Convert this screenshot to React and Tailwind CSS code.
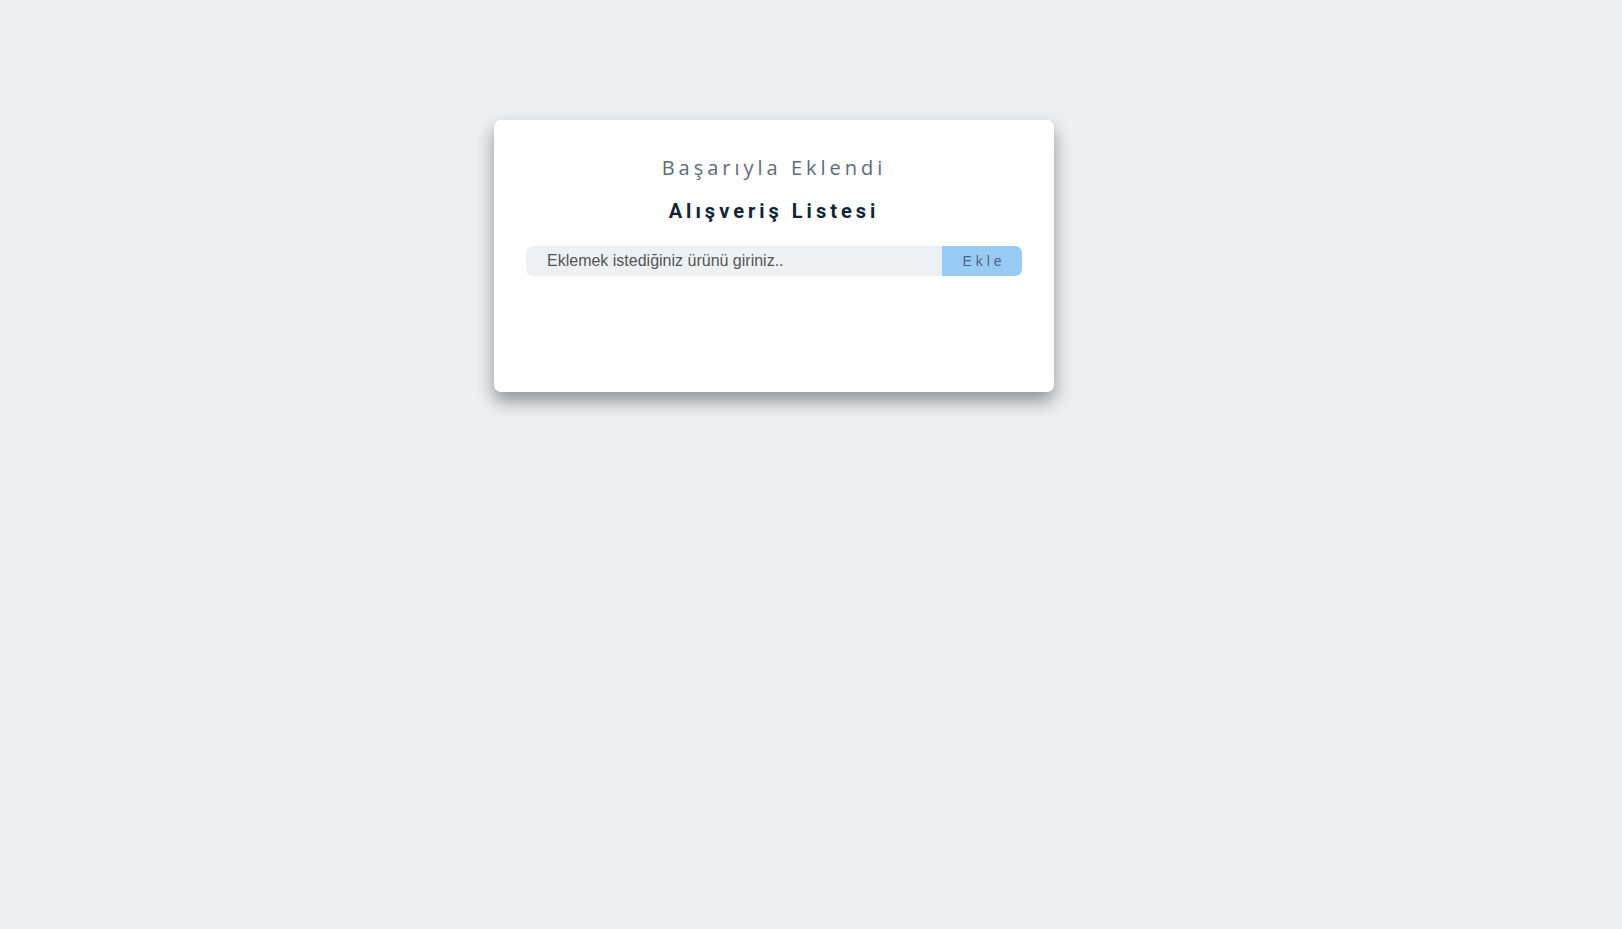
import React, { useState } from 'react';

export default function App() {
  const [item, setItem] = useState('');

  return (
    <div className="min-h-screen w-full bg-[#ecf0f3] pt-[120px]">
      <div className="ml-[494px] w-[560px] h-[272px] bg-white rounded-[7px] shadow-[0_9px_18px_rgba(0,0,0,0.4)] px-8 pt-[34px]">
        <h2 className="text-center text-[20px] leading-[28px] tracking-[4px] text-[#5b6b7c] font-['Open_Sans',sans-serif]">
          Başarıyla Eklendi
        </h2>
        <h1 className="mt-[15px] text-center text-[20px] leading-[28px] font-bold tracking-[4px] text-[#0e2538] font-['Roboto',sans-serif]">
          Alışveriş Listesi
        </h1>
        <form onSubmit={e => e.preventDefault()} className="mt-[21px] flex h-[30px] font-['Liberation_Sans',Arial,sans-serif]">
          <input
            type="text" value={item} onChange={e => setItem(e.target.value)}
            placeholder="Eklemek istediğiniz ürünü giriniz.."
            className="flex-1 min-w-0 bg-[#edf1f4] rounded-l-[7px] pl-[21px] text-[16px] text-[#333] placeholder:text-[#555] focus:outline-none"
          />
          <button type="submit" className="w-[80px] bg-[#97cbf3] rounded-r-[7px] text-[14px] tracking-[4px] pl-1 text-[#4b6582]">
            Ekle
          </button>
        </form>
      </div>
    </div>
  );
}
